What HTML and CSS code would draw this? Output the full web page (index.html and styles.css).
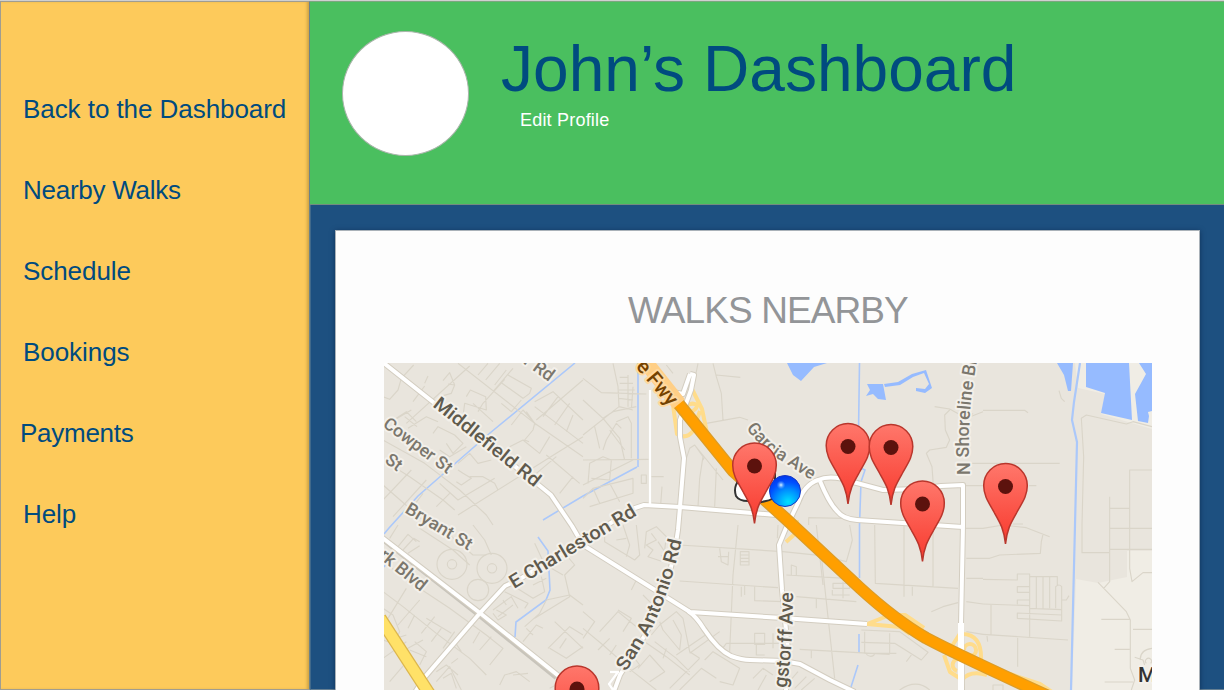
FILE: index.html
```html
<!DOCTYPE html>
<html lang="en">
<head>
<meta charset="utf-8">
<title>John’s Dashboard</title>
<link rel="stylesheet" href="styles.css">
</head>
<body>
<div class="app">
  <nav class="sidebar">
    <a class="nav-item">Back to the Dashboard</a>
    <a class="nav-item nav-item-tight">Nearby Walks</a>
    <a class="nav-item">Schedule</a>
    <a class="nav-item">Bookings</a>
    <a class="nav-item nav-item-tight nav-item-wide">Payments</a>
    <a class="nav-item">Help</a>
  </nav>
  <div class="main">
    <header class="header">
      <div class="avatar"></div>
      <div class="heading">
        <h1 class="title">John’s Dashboard</h1>
        <a class="edit">Edit Profile</a>
      </div>
    </header>
    <main class="content">
      <section class="card">
        <h2 class="card-title">WALKS NEARBY</h2>
        <svg class="map" viewBox="384 363 768 327" width="768" height="327">
          <defs>
            <linearGradient id="pinFill" x1="0" y1="0" x2="0" y2="1"><stop offset="0" stop-color="#ff776b"/><stop offset="1" stop-color="#f83a2e"/></linearGradient>
            <radialGradient id="ball" cx=".6" cy=".85" r=".85"><stop offset="0" stop-color="#00e1ff"/><stop offset=".45" stop-color="#0090ff"/><stop offset=".75" stop-color="#0050ff"/><stop offset="1" stop-color="#0038ee"/></radialGradient>
            <radialGradient id="shine"><stop offset="0" stop-color="#dff6ff"/><stop offset="1" stop-color="#4aa0ff" stop-opacity="0"/></radialGradient>
            <g id="pin">
              <path d="M0 57.5C-1.500 43-5 37-11 26.500C-16 17-21.800 10-21.800-1A21.800 22 0 0 1 21.800-1C21.800 10 16 17 11 26.500C5 37 1.500 43 0 57.500Z" fill="url(#pinFill)" stroke="#b9362c" stroke-width="1.500"/>
              <circle r="7.500" fill="#5c120d"/>
            </g>
            <path id="sanAntonio" d="M626 672L645 641Q668 601 682 539"/>
            <path id="garcia" d="M746 428Q764 452 785 463L822 487"/>
            <path id="shoreline" d="M969.500 475L969.500 425Q970 395 980 345"/>
            <path id="rengstorff" d="M781 730L789 670Q793 640 793 592"/>
          </defs>
          <rect x="384" y="363" width="768" height="327" fill="#e9e5dd"/>
          <path d="M1076 579L1098 583L1127 577V551H1152V690H1072Z" fill="#f0ede5"/>
          <path d="M1053 363H1075L1078 388L1105 394L1101 414L1152 429V363Z" fill="#f0ede5"/>
          <g fill="#96bbff">
            <path d="M787 363L793 375L801 381L814 367L827 363Z"/>
            <path d="M867 384H883L886 400L878 399L873 394L866 396L870 390ZM884 384L898 382L912 374L926 370L932 388L925 393L916 391V388L925 389L929 384L924 373L913 377L900 385L885 387Z"/>
            <path d="M1057 363H1073L1071 391H1068L1064 375ZM1086 363H1129L1132 420L1101 413L1105 393L1086 387ZM1139 363H1152V411L1148 412L1149 416L1148 423L1138 421L1135 394L1146 374Z"/>
          </g>
          <g class="water">
            <path d="M575 363L490 433L418 496L389 528L384 534M384 567L389 559M543 520L583 496L637 467"/>
            <path d="M638 363V467M538 537L548 551L550 590L546 600L516 622L515 637"/>
            <path d="M859.500 363L858 467L865 470L861 482L859.500 525V578M859 634V653M858 665L851 687"/>
            <path d="M1080 363L1074 402L1072 420L1077 442L1075 525L1071 690" stroke-width="2.200"/>
          </g>

          <g class="street" transform="translate(383 360) scale(.33333)">
            <path d="M0 110L20 118L45 90L55 55L92 15M90 125L125 78M125 70L135 48M180 62L200 38L215 75L195 72M215 75L205 100L170 110M70 190L260 18M225 10L455 190L600 290M285 45L315 10M308 60L350 10M335 75L370 30M330 95L390 25M355 68L420 115L440 100L445 85L375 45M250 110L262 90L308 110L310 150L245 130L240 170L225 180M270 130L330 185M285 155L300 130L365 58M355 130L385 155L415 120M385 195L420 150L460 195M430 155L455 190L450 210L425 240L438 245M460 180L600 60M455 125L510 95L600 180M455 140L600 250M480 170L525 110M515 195L560 130M550 215L570 165M0 200L85 150M40 175L70 155L100 185M65 170L102 200M75 205L130 170L165 185M150 220L165 200L215 225L240 250L210 280L190 250M170 270L200 290L250 260M0 240L125 310L230 390L310 465L330 495M0 300L80 350L180 420L215 450M0 420L85 330M30 470L130 360M0 375L120 480M120 400L90 440M160 440L200 400M225 330L240 340L265 355L235 375L220 365M170 370L225 420L335 355M260 350L300 350L335 370L345 390M225 310L260 280L285 310L325 300M225 465L520 280L600 230M490 285L590 370M460 340L520 290M380 260L420 240L470 280L500 230M530 400L570 350"/>
          </g>
          <g class="street" transform="translate(383 525) scale(.33333)">
            <path d="M20 40L45 0M45 65L75 28L100 50M60 75L92 40L110 50M75 85L110 62M110 10L210 75L260 120M200 30L270 90L310 90M270 0L305 45L325 90M0 110L80 170L200 250L310 330L360 370L320 420M0 200L60 245L160 325L260 400L310 450M15 280L70 190M45 300L110 225M75 310L95 270M115 325L155 275M145 350L175 310M180 370L215 320M0 250L30 270L50 320L40 340L70 330M0 345L45 360M205 325L130 280M95 350L130 380L110 420M65 375L120 345M0 400L70 350M20 470L80 400M80 375L130 395M160 470L200 425L235 495M160 440L190 420L225 450M180 460L205 445L220 490M215 350L235 380M290 320L270 355M325 335L290 375M350 480L365 450L400 440L440 470M390 450L435 445M330 255L385 215L405 250M345 275L390 240M340 255L370 270L345 285L330 265M365 200L435 235L425 250M370 240L360 225M395 185L450 220L485 200L475 155M450 180L490 160M425 305L470 265L490 225L560 210L600 240M455 280L560 215L545 150L575 120L550 90M515 290L600 370M495 370L560 305L600 330M500 370L550 400L600 365M530 370L550 340M420 350L460 300L480 310M500 490L560 460M455 55L490 130L540 110M205 415L225 400M430 310L450 330M540 150L505 130"/>
            <circle cx="207" cy="118" r="45"/><circle cx="207" cy="118" r="14"/><circle cx="327" cy="130" r="45"/><circle cx="327" cy="130" r="14"/><circle cx="285" cy="195" r="32"/>
          </g>
          <g class="street" transform="translate(583 360) scale(.33333)">
            <path d="M0 55L55 98L190 102M90 10L105 80L108 140L0 225M135 45V140M150 80L145 150M110 52H135M110 70H150M108 90H155M108 115L150 120M108 140L150 150M0 120L60 175L110 235L125 300M60 175L90 155L160 140M100 185L135 170L145 190V295M115 205L100 190L70 240L60 270M0 300L200 298M35 200L50 265M15 370L20 310L60 290L85 300L80 360L25 355M80 210L125 270M0 375L150 300M0 415L30 385L150 355V400L20 440M30 385L50 430M80 370L110 425M175 345H190V370H175ZM200 350H242M237 380L233 435M250 15L270 40M390 10L400 50L415 100L420 180M400 45L472 52M370 190L470 172L495 180M335 255L420 360M310 295L320 265L335 255L360 290L350 355L345 440M400 325L395 440M360 300L365 290M335 60L345 10M295 325L310 290"/>
          </g>
          <g class="street" transform="translate(583 525) scale(.33333)">
            <path d="M65 15V50L155 105L170 90L160 0M100 45L130 40M120 0L140 60L130 95M145 195L160 165M185 70L190 20L220 5L250 35L245 75M205 25L220 45L190 60L210 75L195 95L240 110L235 90M225 50L245 80M290 60L600 80M410 70L415 110L435 120L437 80M405 95H435M472 80H498V120H472ZM472 90H498M472 100H498M472 110H498M465 0L450 150L440 380M290 168L585 188M475 185V215M485 180V210M515 185V227L600 230M585 0L583 40M0 260L35 290L0 340M0 310L60 360L150 440L220 495M50 320L105 260L190 330M105 255L145 280L120 320M45 375L80 340M80 390L100 360M105 420L140 380L170 420L140 440M165 430L200 390L245 440L200 470M185 350L250 395L320 450M205 330L230 300L280 260L300 280L320 380L350 400M230 290L240 315L290 375L295 330L270 285M215 350L280 400L320 440M250 370L240 400M280 390L375 325M320 385L410 320M350 400L260 490M365 405L390 380L470 430L450 480L410 470M290 495L355 430L400 460M430 355H600M515 325H545V358H515ZM520 360V390H545M570 325V370M510 460L540 430L570 450M525 495L550 450M180 210L205 235M415 375L430 355"/>
          </g>
          <g class="street" transform="translate(783 360) scale(.33333)">
            <path d="M455 140L500 147L550 175L600 155M500 150L485 165L487 210L500 240L490 262L440 270L430 280L447 320L452 390M77 495V473L180 475M390 440L395 495M570 160L540 190M540 310H600M545 377H600M450 385L470 380"/>
          </g>
          <g class="street" transform="translate(783 525) scale(.33333)">
            <path d="M0 80L115 92L155 460M100 0L120 180M115 92L190 110L200 75L208 45L200 0M25 150V120L40 125V150M10 150L190 160M150 175H200V190H150ZM180 170V220M148 195V210H200M40 215L220 230M100 220V250M275 0L277 175L525 190M363 0V215M388 185V212M450 0V185M445 260L480 245L525 233M235 315L350 320L435 382L415 405L335 355L235 352M245 320V385H340M320 325V385M50 373L320 388M85 375V400M370 410L385 390M10 480L45 440M35 490L70 455M55 495L95 460M250 388Q265 400 275 388M350 495Q400 460 440 495M545 10H600M550 100H600M550 160H600M550 230L600 237M550 320L600 328"/>
          </g>
          <g class="street" transform="translate(983 360) scale(.33333)">
            <path d="M0 151H125L135 158M228 92L235 115L245 125M0 310H230M138 377H160M90 492H120M297 495L302 290L295 175L310 165L430 192L450 185L507 200M507 330H440V495M380 410V495M380 445H440"/>
          </g>
          <g class="street" transform="translate(983 525) scale(.33333)">
            <path d="M0 10L60 0L130 8L200 35M180 28L175 50L172 85L50 90L20 100H0M0 163L103 165V147H140V335M140 155H223V180M160 155V250M180 155V250M200 155V250M218 250V185Q228 175 236 185V288L103 280V264L236 270M0 237L140 242M140 185H103V202H140M140 225H103V238M140 250L236 254M236 225H250L258 212M24 240V328M0 328L255 345M104 338V425M12 333L14 350M297 0V83H378M380 0V170L362 190M380 10H507M380 73H507M440 0V130L447 170L480 143H507M345 172L430 260L442 285V430L455 465L445 495M355 283H440M450 313H507M395 373H440M507 370Q470 375 472 405M455 397L480 405L485 420M490 415A9 9 0 1 1 503 415M365 471H450M30 495V480H60V495"/>
          </g>

          <g class="ramp">
            <path d="M673 405L677 434Q686 440 693 431L700 411M684 409Q690 401 697 405Q697 410 690 412M690 385L702 409L707 433M797 520L796 533L786 542"/>
            <path d="M867 624L890 615L905 615L924 628M867 624L900 627L910 634M927 640L952 646L961 632M944 655L950 672L961 679M962 634Q982 634 981 660M964 650A6 6 0 1 1 971 656M961 659A6 6 0 1 0 957 671M962 680Q970 670 987 675M1010 674L1040 684L1055 694"/>
          </g>
          <path d="M384 541L478 615L556 678" stroke="#c8c4bb" stroke-width="4" fill="none"/>
          <g class="road-edge"><use href="#whiteRoads"/></g>
          <g class="road">
            <g id="whiteRoads">
              <path d="M380 360L433 402L540 486L551 495L572 526L583 545L655 590L690 612L783 618L867 624"/>
              <path d="M380 536L480 613L585 697M414 694L424 678L480 613L505 586L520 579L635 508L644 505L680 507L776 515"/>
              <path d="M690 374L694 375L691 390L680 420L680 437L684 458L680 507L678 530Q670 590 645 635L620 675L613 694M663 380L673 392L683 394L690 374"/>
              <path d="M650 390V505M610 672L618 672L609 684L613 690" stroke-width="2.500"/>
              <path d="M688 611Q696 616 704 629Q718 650 731 656Q742 660 750 660L783 661L800 664L830 680L855 692"/>
              <path d="M786 690L788 650L782 590L779 545L786 528L798 503Q804 485 818 480Q831 474 853 482L883 490L920 489L941 486L963 485V525L961 625L962 690"/>
              <path d="M820 481Q829 503 837 511Q843 519 857 520L963 527"/>
            </g>
            <path d="M961 623V690" stroke-width="6"/>
          </g>
          <path d="M380 618L432 698" stroke="#dcb64d" stroke-width="13" fill="none"/>
          <path d="M380 618L432 698" stroke="#ffe168" stroke-width="10.500" fill="none"/>
          <path d="M642 358L678 403L733 471L785 518L860 588Q895 620 926 638Q960 656 1048 696" stroke="#dc9c27" stroke-width="12.500" fill="none"/>
          <path d="M642 358L678 403L733 471L785 518L860 588Q895 620 926 638Q960 656 1048 696" stroke="#ff9f00" stroke-width="10" fill="none"/>
          <path d="M644 360L679 404" stroke="#ffcf86" stroke-width="15" fill="none"/>

          <g class="label">
            <text transform="translate(432 406) rotate(38.600)" font-size="19" textLength="131" lengthAdjust="spacingAndGlyphs">Middlefield Rd</text>
            <text transform="translate(514 589) rotate(-31)" font-size="19" textLength="144" lengthAdjust="spacingAndGlyphs">E Charleston Rd</text>
            <text font-size="19"><textPath href="#sanAntonio" textLength="144" lengthAdjust="spacingAndGlyphs">San Antonio Rd</textPath></text>
            <text font-size="19.500" text-anchor="end"><textPath href="#rengstorff" startOffset="100%">gstorff Ave</textPath></text>
            <g class="label-soft">
              <text transform="translate(382 426) rotate(36.500)" font-size="17.500" textLength="81" lengthAdjust="spacingAndGlyphs">Cowper St</text>
              <text transform="translate(384 462) rotate(36)" font-size="17.500">St</text>
              <text transform="translate(549 382) rotate(36)" font-size="18" text-anchor="end">r Rd</text>
              <text transform="translate(404 512) rotate(31)" font-size="17.500" textLength="75" lengthAdjust="spacingAndGlyphs">Bryant St</text>
              <text transform="translate(421 592) rotate(39)" font-size="18" text-anchor="end">rk Blvd</text>
              <text font-size="17.500"><textPath href="#garcia" textLength="84" lengthAdjust="spacingAndGlyphs">Garcia Ave</textPath></text>
              <text font-size="18.200"><textPath href="#shoreline">N Shoreline Bl</textPath></text>
            </g>
            <text class="label-fwy" transform="translate(669 407) rotate(50)" font-size="20.500" text-anchor="end">e Fwy</text>
            <text class="label-city" x="1138" y="682" font-size="21">M</text>
          </g>

          <path d="M737 475Q739 481 736 485Q734 490 736 496Q739 501 748 501L757 503L766 501Q773 500 775 495V474Z" fill="#fff" stroke="#333" stroke-width="2"/>
          <circle cx="785" cy="491" r="15.500" fill="url(#ball)" stroke="#1637c4"/>
          <circle cx="781" cy="485" r="4.500" fill="url(#shine)"/>
          <use href="#pin" x="754.500" y="466"/>
          <use href="#pin" x="848" y="446.500"/>
          <use href="#pin" x="891" y="447.500"/>
          <use href="#pin" x="922.500" y="504"/>
          <use href="#pin" x="1005.500" y="486.500"/>
          <use href="#pin" x="577" y="689"/>
        </svg>
      </section>
    </main>
  </div>
</div>
</body>
</html>
```
FILE: styles.css
```css
* { box-sizing: border-box; }
body {
  margin: 0;
  overflow: hidden;
  font-family: "Liberation Sans", Arial, sans-serif;
}
.app {
  display: flex;
  height: 690px;
  overflow: hidden;
  border-top: 1px solid #d0d0d0;
  background: #1d5080;
}
.sidebar {
  display: flex;
  flex-direction: column;
  gap: 51px;
  flex: none;
  width: 310px;
  padding: 92px 0 0 22px;
  border: 1px solid #a09d90;
  border-right-color: #6d8288;
  background: #fdca5b;
  box-shadow: inset -3px 0 3px -1px rgba(120, 90, 30, .35);
}
.nav-item {
  color: #004b7f;
  font-size: 26px;
  line-height: 30px;
  letter-spacing: -.06px;
  white-space: nowrap;
}
.nav-item-tight { letter-spacing: -.27px; }
.nav-item-wide { margin-left: -3px; }
.main {
  display: flex;
  flex: 1;
  flex-direction: column;
  min-width: 0;
}
.header {
  display: flex;
  flex: none;
  gap: 32px;
  height: 204px;
  padding: 29px 0 0 32px;
  border-top: 1px solid #7ba77f;
  border-bottom: 1px solid #748b80;
  background: #4abf5f;
}
.avatar {
  flex: none;
  width: 127px;
  height: 125px;
  border: 1px solid #a9b5aa;
  border-radius: 50%;
  background: #fff;
}
.heading {
  display: flex;
  flex-direction: column;
}
.title {
  margin: 0;
  color: #004b7f;
  font-size: 64px;
  font-weight: 400;
  line-height: 76px;
  letter-spacing: .05px;
}
.edit {
  padding: 1px 0 0 19px;
  color: #fff;
  font-size: 18px;
  line-height: 24px;
  letter-spacing: .2px;
}
.content {
  display: flex;
  flex: 1;
  min-height: 0;
  padding: 25px 24px 0 24px;
  border-left: 1px solid #41698a;
  border-bottom: 1px solid #657f92;
}
.card {
  display: flex;
  flex: 1;
  flex-direction: column;
  align-items: center;
  height: 461px;
  padding: 59px 0 0 1px;
  border: 1px solid #aab2b9;
  background: #fdfdfd;
  box-shadow: 0 1px 5px rgba(0, 20, 50, .5);
}
.card-title {
  margin: 0 0 31px;
  color: #939598;
  font-size: 37px;
  font-weight: 400;
  line-height: 42px;
  letter-spacing: -.9px;
}
.map {
  display: block;
  flex: none;
}
.street {
  fill: none;
  stroke: #dad5c9;
  stroke-width: 3.4;
  stroke-linejoin: round;
}
.water {
  fill: none;
  stroke: #abc8fa;
  stroke-width: 1.6;
}
.ramp {
  fill: none;
  stroke: #ffdc8b;
  stroke-width: 4;
  stroke-linejoin: round;
}
.road-edge {
  fill: none;
  stroke: #d3cdc0;
  stroke-width: 6;
  stroke-linejoin: round;
}
.road {
  fill: none;
  stroke: #fff;
  stroke-width: 4;
  stroke-linejoin: round;
}
.label {
  font-family: Roboto, sans-serif;
  font-weight: 500;
  fill: #5f5a4d;
  stroke: #f3f0ea;
  stroke-width: 4px;
  stroke-linejoin: round;
  paint-order: stroke;
}
.label-soft { fill: #7b776d; }
.label-fwy {
  fill: #744200;
  stroke: #ffd9a0;
}
.label-city { fill: #333; }
```
